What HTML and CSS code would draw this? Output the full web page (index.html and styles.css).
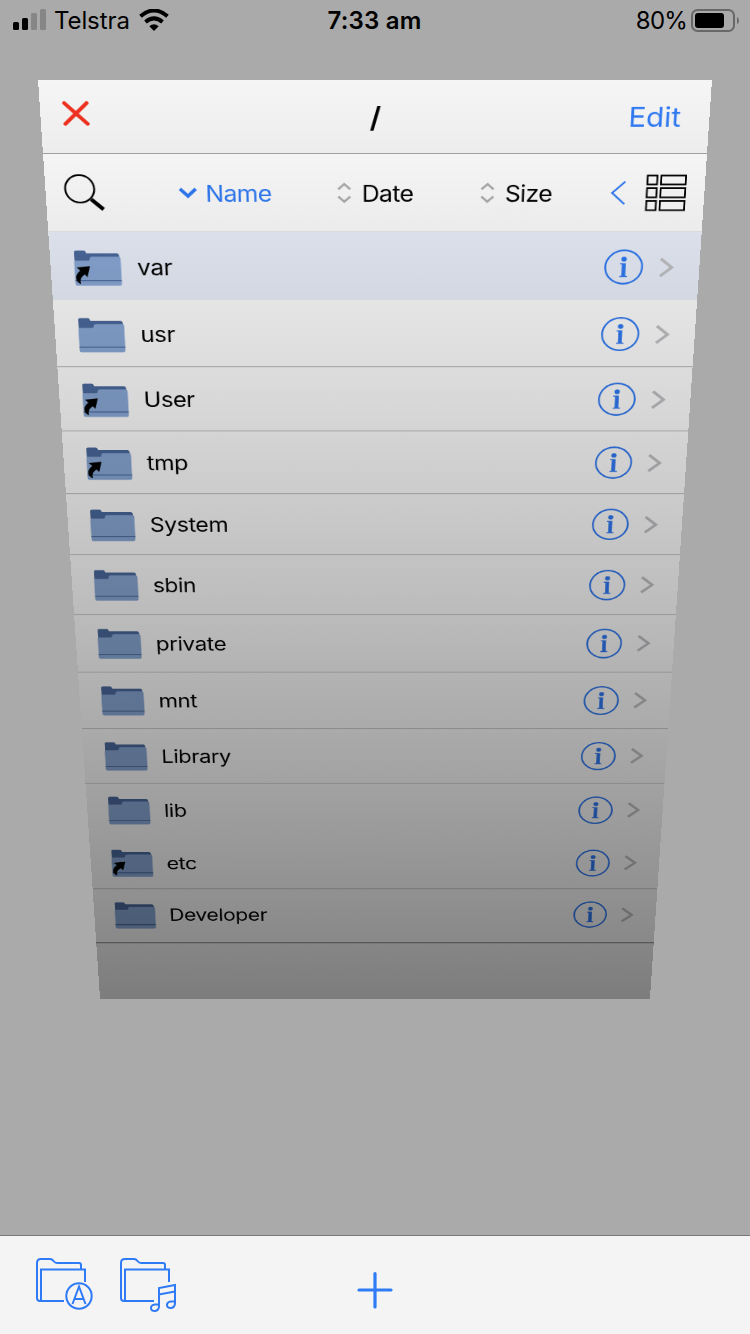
FILE: index.html
```html
<!DOCTYPE html>
<html lang="en">
<head>
<meta charset="utf-8">
<title>Files</title>
<link rel="stylesheet" href="styles.css">
</head>
<body>
<svg class="defs" width="0" height="0">
  <defs>
    <symbol id="folder" viewBox="0 0 56 47">
      <path fill="#4b6a9e" d="M1 14V2.500Q1 .5 3 .5H12.500Q14.500 .5 15 3L15.500 4H51Q54 4 54 8V14Z"/>
      <path fill="#8aa9d7" d="M1 14H17Q19 14 19 11.500Q19 8.500 22 8.500H53Q55.500 8.500 55.500 11V44Q55.500 46.500 53.500 46.500H2.500Q.5 46.500 .5 44V15Z"/>
      <path stroke="#4b6a9e" stroke-width="1.600" d="M.5 39.500H55.500"/>
    </symbol>
    <symbol id="alias" viewBox="0 0 18 24">
      <path d="M2 2 17.500 .3 14 14.500 11 11Q5.500 14.500 5.500 20L6.200 23.300Q3.500 22.500 1.500 19.500Q0 16.500 1 13Q2.500 8.500 6 6Z"/>
    </symbol>
    <symbol id="info" viewBox="0 0 46 46">
      <circle cx="23" cy="23" r="21.800" fill="none" stroke="#2f7af5" stroke-width="2.200"/>
      <circle cx="23" cy="12.700" r="3.200" fill="#2f7af5"/>
      <path fill="#2f7af5" d="M18.500 18H25.300V34.500H27.500V36H18.500V34.500H20.700V19.500H18.500Z"/>
    </symbol>
    <symbol id="chevron" viewBox="0 0 18 26">
      <path fill="none" stroke="#c2c2c6" stroke-width="3.600" d="M2 1.800 15 13 2 24.200"/>
    </symbol>
    <symbol id="sort" viewBox="0 0 16 26">
      <path fill="none" stroke="#adadad" stroke-width="2.600" d="M1.200 8.500 8 2 14.800 8.500M1.200 17.500 8 24 14.800 17.500"/>
    </symbol>
  </defs>
</svg>
<div class="screen">
  <header class="status">
    <div class="status-left">
      <svg width="34" height="22" viewBox="0 0 34 22"><rect x="1" y="13" width="6" height="8" rx="1.500"/><rect x="10" y="9" width="6" height="12" rx="1.500"/><g fill="#868686"><rect x="19" y="4" width="6" height="17" rx="1.500"/><rect x="28" y="0" width="6" height="21" rx="1.500"/></g></svg>
      <span class="carrier">Telstra</span>
      <svg class="wifi" width="30" height="22" viewBox="0 0 30 22"><g fill="none" stroke="#000" stroke-width="4"><path d="M1.500 7.200Q15-4.200 28.500 7.200"/><path d="M6.500 13Q15 5.800 23.500 13"/></g><path d="M15 22 10.300 17.300Q15 13.200 19.700 17.300Z"/></svg>
    </div>
    <div class="clock">7:33 am</div>
    <div class="status-right">
      <span class="percent">80%</span>
      <svg width="48" height="23" viewBox="0 0 48 23"><rect x="1" y="1" width="42" height="21" rx="5.500" fill="none" stroke="#686868" stroke-width="2"/><rect x="4" y="4" width="29" height="15" rx="3"/><path fill="#686868" d="M46 8Q48 9 48 11.500T46 15Z"/></svg>
    </div>
  </header>

  <main class="stage">
    <section class="panel">
      <nav class="nav">
        <svg class="close" width="30" height="30" viewBox="0 0 30 30"><path d="M2.500 2.500 27.500 27.500M27.500 2.500 2.500 27.500" stroke="#f0311f" stroke-width="4.500" stroke-linecap="round"/></svg>
        <h1 class="title">/</h1>
        <a class="edit">Edit</a>
      </nav>
      <div class="sortbar">
        <svg class="search" width="46" height="46" viewBox="0 0 46 46"><ellipse cx="18" cy="18" rx="16.500" ry="17" fill="none" stroke="#000" stroke-width="2.200"/><path d="M30.500 31 44 43.500" stroke="#000" stroke-width="4.600"/></svg>
        <div class="sort by-name"><svg width="22" height="16" viewBox="0 0 22 16"><path d="M2 3 11 12 20 3" fill="none" stroke="#2f7af5" stroke-width="4"/></svg><span>Name</span></div>
        <div class="sort by-date"><svg width="16" height="26"><use href="#sort"/></svg><span>Date</span></div>
        <div class="sort by-size"><svg width="16" height="26"><use href="#sort"/></svg><span>Size</span></div>
        <svg class="back" width="18" height="30" viewBox="0 0 18 30"><path d="M16.500 1 2 15 16.500 29" fill="none" stroke="#2f7af5" stroke-width="2.200"/></svg>
        <svg class="grid" width="48" height="46" viewBox="0 0 48 46"><g fill="none" stroke="#000" stroke-width="2"><path d="M2.500 1.500H13.500V12.500H2.500ZM18 1.500H46V12.500H18ZM2.500 17H13.500V28.500H2.500ZM18 17H46V28.500H18ZM2.500 33H13.500V44.500H2.500ZM18 33H46V44.500H18Z"/></g></svg>
      </div>
      <ul class="list">
        <li class="row selected"><span class="icon"><svg class="folder"><use href="#folder"/></svg><svg class="alias"><use href="#alias"/></svg></span><span class="name">var</span><svg class="info"><use href="#info"/></svg><svg class="more"><use href="#chevron"/></svg></li>
        <li class="row"><span class="icon"><svg class="folder"><use href="#folder"/></svg></span><span class="name">usr</span><svg class="info"><use href="#info"/></svg><svg class="more"><use href="#chevron"/></svg></li>
        <li class="row"><span class="icon"><svg class="folder"><use href="#folder"/></svg><svg class="alias"><use href="#alias"/></svg></span><span class="name">User</span><svg class="info"><use href="#info"/></svg><svg class="more"><use href="#chevron"/></svg></li>
        <li class="row"><span class="icon"><svg class="folder"><use href="#folder"/></svg><svg class="alias"><use href="#alias"/></svg></span><span class="name">tmp</span><svg class="info"><use href="#info"/></svg><svg class="more"><use href="#chevron"/></svg></li>
        <li class="row"><span class="icon"><svg class="folder"><use href="#folder"/></svg></span><span class="name">System</span><svg class="info"><use href="#info"/></svg><svg class="more"><use href="#chevron"/></svg></li>
        <li class="row"><span class="icon"><svg class="folder"><use href="#folder"/></svg></span><span class="name">sbin</span><svg class="info"><use href="#info"/></svg><svg class="more"><use href="#chevron"/></svg></li>
        <li class="row"><span class="icon"><svg class="folder"><use href="#folder"/></svg></span><span class="name">private</span><svg class="info"><use href="#info"/></svg><svg class="more"><use href="#chevron"/></svg></li>
        <li class="row"><span class="icon"><svg class="folder"><use href="#folder"/></svg></span><span class="name">mnt</span><svg class="info"><use href="#info"/></svg><svg class="more"><use href="#chevron"/></svg></li>
        <li class="row"><span class="icon"><svg class="folder"><use href="#folder"/></svg></span><span class="name">Library</span><svg class="info"><use href="#info"/></svg><svg class="more"><use href="#chevron"/></svg></li>
        <li class="row plain"><span class="icon"><svg class="folder"><use href="#folder"/></svg></span><span class="name">lib</span><svg class="info"><use href="#info"/></svg><svg class="more"><use href="#chevron"/></svg></li>
        <li class="row"><span class="icon"><svg class="folder"><use href="#folder"/></svg><svg class="alias"><use href="#alias"/></svg></span><span class="name">etc</span><svg class="info"><use href="#info"/></svg><svg class="more"><use href="#chevron"/></svg></li>
        <li class="row plain"><span class="icon"><svg class="folder"><use href="#folder"/></svg></span><span class="name">Developer</span><svg class="info"><use href="#info"/></svg><svg class="more"><use href="#chevron"/></svg></li>
      </ul>
      <div class="panel-foot"></div>
      <div class="shade"></div>
    </section>
  </main>

  <footer class="toolbar">
    <div class="tools">
      <svg width="60" height="56" viewBox="0 0 60 56"><g fill="none" stroke="#2f7af5" stroke-width="2"><path d="M46 13V8Q46 6 44 6H22Q20 6 18.500 4T15 2H6Q2 2 2 6V41Q2 44 5 44H29M6 44V12.500H50V25"/><circle cx="44" cy="39" r="12.700"/><path d="M37.500 47 44 29.500 50.500 47M39.500 42H48.500"/></g></svg>
      <svg width="60" height="56" viewBox="0 0 60 56"><g fill="none" stroke="#2f7af5" stroke-width="2"><path d="M46 13V8Q46 6 44 6H22Q20 6 18.500 4T15 2H6Q2 2 2 6V41Q2 44 5 44H35M6 44V12.500H50V25"/><path d="M40 50V31L56 28V47M40 37.500 56 34.500M40 47.500H36Q32 48 32 51T36 54Q40 53.500 40 49M56 44.500H52Q48 45 48 48T52 51Q56 50.500 56 46"/></g></svg>
    </div>
    <svg class="add" width="36" height="38" viewBox="0 0 36 38"><path d="M18 2.500V36M2 19H34" stroke="#2f7af5" stroke-width="3.200" stroke-linecap="round"/></svg>
    <div></div>
  </footer>
</div>
</body>
</html>
```
FILE: styles.css
```css
* { box-sizing: border-box; }
body {
  margin: 0;
  background: #aaa;
  font-family: Inter, "Liberation Sans", sans-serif;
  color: #000;
}
svg { display: block; flex: none; }
.defs { position: absolute; }
.screen {
  width: 750px;
  height: 1334px;
  overflow: hidden;
  display: flex;
  flex-direction: column;
  background: #aaa;
}
.status {
  flex: none;
  height: 40px;
  padding: 0 11px 0 12px;
  display: grid;
  grid-template-columns: 1fr auto 1fr;
  align-items: center;
  font-size: 24px;
}
.status-left, .status-right { display: flex; align-items: center; }
.status-left { gap: 8px; }
.status-right { justify-content: flex-end; gap: 5px; }
.carrier { letter-spacing: -.1px; }
.wifi { margin-left: 1px; }
.percent { letter-spacing: -.8px; margin-right: -1px; }
.clock { font-weight: 600; letter-spacing: .2px; margin-right: 2px; }

/* The stage is the full screen in its own coordinates, tilted away from the viewer. */
.stage { flex: 1; min-height: 0; margin-top: -40px; }
.panel {
  position: relative;
  width: 750px;
  height: 1335px;
  background: #fff;
  display: flex;
  flex-direction: column;
  transform-origin: 0 0;
  transform: matrix3d(1, 0, 0, 0, 0.0705244, 0.95344, 0, 0.000188065, 0, 0, 1, 0, 42.285, 89.0208, 0, 1.11276);
}
.nav {
  flex: none;
  height: 89px;
  padding: 0 32px 0 25px;
  display: grid;
  grid-template-columns: 1fr auto 1fr;
  align-items: center;
  background: #f5f5f5;
  border-bottom: 1.500px solid #a2a2a2;
}
.close { margin-bottom: 8px; }
.title { margin: 2px -4px 0 4px; font-size: 34px; font-weight: 600; line-height: 40px; }
.edit { justify-self: end; color: #2f7af5; font-size: 33px; line-height: 40px; }
.sortbar {
  flex: none;
  height: 97px;
  padding-left: 21px;
  display: flex;
  align-items: center;
  background: #fdfdfd;
  border-bottom: 1px solid #e6e6e6;
  font-size: 28px;
  letter-spacing: -.6px;
}
.sort { display: flex; align-items: center; flex: none; }
.sort span { margin-top: 2px; }
.by-name { width: 181px; margin-left: 84px; gap: 9px; color: #2f7af5; }
.by-date { width: 163px; gap: 12px; }
.by-size { width: 148px; gap: 12px; }
.grid { margin-left: 21px; }
.list { list-style: none; margin: 0; padding: 0; flex: none; }
.row {
  height: 87.100px;
  padding: 0 28px 0 27px;
  display: flex;
  align-items: center;
  box-shadow: 0 1.300px #c4c4c6;
}
.selected { background: #ebf0fb; box-shadow: none; }
.plain { box-shadow: none; }
.icon { position: relative; margin-top: 4px; }
.folder { width: 55px; height: 46px; }
.alias { position: absolute; left: 1px; top: 20px; width: 18px; height: 24px; }
.name { flex: 1; margin-left: 18px; font-size: 28px; line-height: 36px; margin-top: 3px; letter-spacing: -.45px; }
.info { width: 45px; height: 45px; margin-top: 2px; }
.more { width: 18px; height: 26px; margin: 2px 1px 0 18px; }
.panel-foot { flex: none; height: 99px; margin-top: auto; background: #fafafa; border-top: 2px solid #a0a0a0; }
.shade {
  position: absolute;
  inset: 0;
  background: linear-gradient(rgba(0, 0, 0, 0), rgba(0, 0, 0, .5));
}
.toolbar {
  position: relative;
  flex: none;
  height: 99px;
  padding: 0 34px;
  display: grid;
  grid-template-columns: 1fr auto 1fr;
  background: #f4f4f4;
  border-top: 1px solid #777;
}
.tools { display: flex; gap: 24px; padding: 21px 0 0 1px; }
.add { margin-top: 35px; }
```
